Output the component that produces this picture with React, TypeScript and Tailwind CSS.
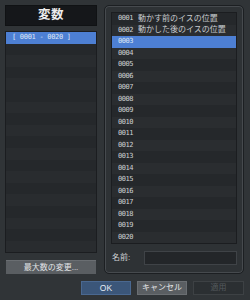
import React from "react";

const jp = '"Liberation Sans", "Noto Sans CJK JP", sans-serif';
const mono = '"DejaVu Sans Mono", "Noto Sans CJK JP", monospace';

const names: Record<number, string> = {
  1: "動かす前のイスの位置",
  2: "動かした後のイスの位置",
};

export default function App() {
  const rows = Array.from({ length: 20 }, (_, i) => i + 1);
  const leftRows = Array.from({ length: 19 }, (_, i) => i);
  return (
    <div
      className="w-[250px] h-[300px] bg-[#303437] flex flex-col pt-[5px] pl-[5px] pr-[6px] overflow-hidden"
      style={{ fontFamily: jp }}
    >
      <div className="flex gap-[7px] h-[269px]">
        {/* Left column */}
        <div className="w-[92px] flex flex-col">
          <div className="h-[21px] bg-[#15171a] bg-[radial-gradient(#ffffff14_0.6px,transparent_0.7px)] bg-[length:2px_2px] flex items-center justify-center border border-[#101214]">
            <span className="text-[12.5px] font-bold text-[#ececec] leading-none tracking-[0.5px]">変数</span>
          </div>
          <div className="mt-[5px] h-[222px] bg-[#25282b] border border-[#1b1d20] overflow-hidden">
            <div className="h-[11.6px] bg-[#4d7fd3] flex items-center pl-[6px]">
              <span className="text-[7px] tracking-[-0.3px] text-[#dde6f5] leading-none whitespace-pre" style={{ fontFamily: mono }}>
                [ 0001 - 0020 ]
              </span>
            </div>
            {leftRows.map((i) => (
              <div key={i} className={`h-[11.6px] ${i % 2 === 0 ? "bg-[#25282b]" : "bg-[#292c2f]"}`} />
            ))}
          </div>
          <div className="mt-[7px] mx-[1px] h-[14px] bg-[#5a5e62] border-t border-[#6a6e72] flex items-center justify-center">
            <span className="text-[8px] text-[#e2e4e6] leading-none">最大数の変更...</span>
          </div>
        </div>

        {/* Right frame */}
        <div className="w-[140px] rounded-[5px] border border-[#1c1f22] shadow-[inset_0_0_0_1px_#464a4e] bg-[#2e3235] pt-[6px] px-[6px] flex flex-col">
          <div className="h-[232px] bg-[#25282b] border border-[#1b1d20] overflow-hidden">
            {rows.map((n) => (
              <div
                key={n}
                className={`h-[11.5px] flex items-center pl-[6px] ${
                  n === 3 ? "bg-[#4d7fd3]" : n % 2 === 1 ? "bg-[#25282b]" : "bg-[#2a2d30]"
                }`}
              >
                <span
                  className={`w-[14px] text-[7px] tracking-[-0.5px] leading-none ${n === 3 ? "text-[#dde6f5]" : "text-[#cdd0d3]"}`}
                  style={{ fontFamily: mono }}
                >
                  {String(n).padStart(4, "0")}
                </span>
                {names[n] && (
                  <span className="ml-[6px] text-[8px] leading-none text-[#c8cbce] whitespace-nowrap">{names[n]}</span>
                )}
              </div>
            ))}
          </div>
          <div className="mt-[7px] flex items-center h-[14px]">
            <span className="ml-[1px] text-[8px] text-[#d0d3d6] leading-none w-[32px]">名前:</span>
            <div className="flex-1 h-[14px] bg-[#232629] border border-[#3f4347]" />
          </div>
        </div>
      </div>

      {/* Bottom buttons */}
      <div className="mt-[7px] flex justify-end gap-[6px]">
        <div className="w-[50px] h-[14px] bg-[#3b5679] bg-[radial-gradient(#ffffff12_0.6px,transparent_0.7px)] bg-[length:2px_2px] border border-[#4a6890] flex items-center justify-center">
          <span className="text-[8.5px] text-[#e6ebf2] leading-none">OK</span>
        </div>
        <div className="w-[50px] h-[14px] bg-[#5a5e62] border border-[#6a6e72] flex items-center justify-center">
          <span className="text-[8px] text-[#e4e6e8] leading-none">キャンセル</span>
        </div>
        <div className="w-[51px] h-[14px] bg-[#2b2f32] border border-[#3d4144] flex items-center justify-center">
          <span className="text-[8px] text-[#555a5e] leading-none">適用</span>
        </div>
      </div>
    </div>
  );
}
